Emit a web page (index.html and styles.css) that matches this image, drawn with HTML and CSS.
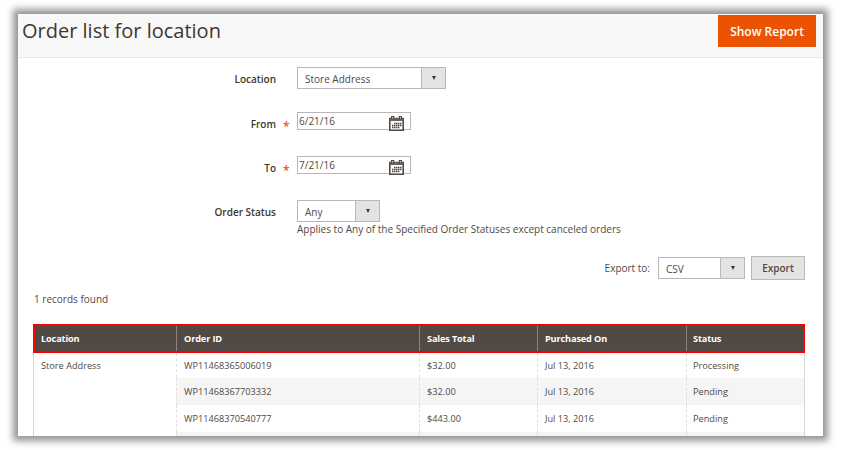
FILE: index.html
```html
<!DOCTYPE html>
<html lang="en">
<head>
<meta charset="utf-8">
<title>Order list for location</title>
<link rel="stylesheet" href="styles.css">
</head>
<body>
<svg width="0" height="0" class="defs" aria-hidden="true">
  <symbol id="calendar" viewBox="0 0 15 15">
    <path d="M.8 2.5h13.4v11.7H.8z" fill="#fff" stroke="#514943" stroke-width="1.6"/>
    <path d="M1 2h13v3H1z" fill="#6b625c"/>
    <path d="M2 0h3.2v3.2H2zM9.8 0H13v3.2H9.8z" fill="#514943"/>
    <path d="M3.1 1h1v1.4h-1zM10.9 1h1v1.4h-1z" fill="#d8d8d8"/>
    <path d="M5 7.5h7.5M3 9.5h9.5M3 11.5h7.4" fill="none" stroke="#514943" stroke-width="1.4" stroke-dasharray="1.5 .5"/>
  </symbol>
</svg>
<main class="panel">
  <header class="header">
    <h1>Order list for location</h1>
    <button class="primary">Show Report</button>
  </header>
  <form class="filters">
    <div class="field location">
      <label>Location</label>
      <div class="select wide"><span>Store Address</span><i></i></div>
    </div>
    <div class="field date">
      <label class="required">From</label>
      <div class="input"><span>6/21/16</span><svg><use href="#calendar"/></svg></div>
    </div>
    <div class="field date">
      <label class="required">To</label>
      <div class="input"><span>7/21/16</span><svg><use href="#calendar"/></svg></div>
    </div>
    <div class="field status">
      <label>Order Status</label>
      <div>
        <div class="select small"><span>Any</span><i></i></div>
        <p class="note">Applies to Any of the Specified Order Statuses except canceled orders</p>
      </div>
    </div>
  </form>
  <div class="export">
    <span class="export-label">Export to:</span>
    <div class="select csv"><span>CSV</span><i></i></div>
    <button class="secondary">Export</button>
  </div>
  <p class="records"><span>1 records found</span></p>
  <table class="grid">
    <colgroup><col class="c1"><col class="c2"><col class="c3"><col class="c4"><col class="c5"></colgroup>
    <thead>
      <tr><th><span>Location</span></th><th><span>Order ID</span></th><th><span>Sales Total</span></th><th><span>Purchased On</span></th><th><span>Status</span></th></tr>
    </thead>
    <tbody>
      <tr class="first"><td rowspan="4" class="group">Store Address</td><td>WP11468365006019</td><td>$32.00</td><td>Jul 13, 2016</td><td>Processing</td></tr>
      <tr class="odd"><td>WP11468367703332</td><td>$32.00</td><td>Jul 13, 2016</td><td>Pending</td></tr>
      <tr><td>WP11468370540777</td><td>$443.00</td><td>Jul 13, 2016</td><td>Pending</td></tr>
      <tr class="odd last"><td></td><td></td><td></td><td></td></tr>
    </tbody>
  </table>
</main>
</body>
</html>
```
FILE: styles.css
```css
* { box-sizing: border-box; }
body {
  margin: 0;
  padding: 14px 18px;
  height: 450px;
  overflow: hidden;
  background: #fff;
  font: 10px/14px "Open Sans", sans-serif;
  color: #514943;
}
.defs { display: none; }
h1, p { margin: 0; font-weight: 400; }
button { font-family: inherit; padding: 0; border-radius: 0; }
.panel {
  width: 805px;
  height: 422px;
  background: #fff;
  box-shadow: 0 0 7px 5px rgba(0, 0, 0, .42);
}
.header {
  display: flex;
  justify-content: space-between;
  height: 44px;
  padding: 1px 7px 0 4px;
  background: #f8f8f8;
  border-bottom: 1px solid #e8e8e8;
}
h1 { font-size: 20px; line-height: 32px; color: #41362f; }
.primary {
  width: 98px;
  height: 32px;
  border: 1px solid #eb5202;
  background: #eb5202;
  color: #fff;
  font-size: 12px;
  font-weight: 600;
}
.field { display: flex; }
.field label {
  width: 258px;
  text-align: right;
  margin-right: 21px;
  font-weight: 600;
  color: #41362f;
  position: relative;
}
.required::after {
  content: "*";
  position: absolute;
  left: 265px;
  top: 8px;
  color: #eb5202;
  font-size: 12px;
  font-weight: 600;
}
.location { height: 54px; padding-top: 9px; }
.location label, .status label { padding-top: 5px; }
.date { height: 44px; }
.date label { padding-top: 5px; }
.status { height: 56px; }
.select {
  display: flex;
  height: 22px;
  border: 1px solid #b8b8b8;
  background: #fff;
  line-height: 22px;
}
.select span { flex: 1; padding-left: 7px; }
.select i {
  width: 24px;
  background: #e3e3e3;
  border-left: 1px solid #b8b8b8;
  display: flex;
  justify-content: center;
  padding-top: 8px;
}
.select i::before {
  content: "";
  width: 0;
  height: 0;
  border: solid transparent;
  border-width: 4px 2.5px 0;
  border-top-color: #41362f;
}
.wide { width: 149px; }
.small { width: 83px; }
.csv { width: 87px; }
.input {
  display: flex;
  justify-content: space-between;
  width: 114px;
  height: 18px;
  padding: 0 6px 0 1px;
  border: 1px solid #b8b8b8;
  line-height: 16px;
}
.input svg { width: 15px; height: 15px; margin-top: 3px; overflow: visible; flex: none; }
.export {
  display: flex;
  justify-content: flex-end;
  align-items: center;
  height: 24px;
  padding-right: 18px;
}
.export-label { margin-right: 8px; }
.secondary {
  width: 54px;
  height: 24px;
  margin-left: 6px;
  border: 1px solid #b8b8b8;
  background: #e3e3e3;
  color: #514943;
  font-size: 10px;
  font-weight: 600;
}
.records { padding: 12px 0 0 16px; height: 44px; }
.grid {
  width: 772px;
  margin-left: 15px;
  border-collapse: separate;
  border-spacing: 0;
  table-layout: fixed;
  font-size: 9.2px;
}
.c1 { width: 143px; }
.c2 { width: 243px; }
.c3 { width: 118px; }
.c4 { width: 149px; }
th {
  height: 29px;
  padding: 0 0 0 8px;
  text-align: left;
  letter-spacing: -.15px;
  color: #fff;
  background: #514943;
  border: solid #f00;
  border-width: 2px 0;
  background-image: linear-gradient(#8a837f, #8a837f);
  background-size: 1px 100%;
  background-repeat: no-repeat;
}
th:first-child { border-left-width: 2px; padding-left: 6px; background-image: none; }
th:last-child { border-right-width: 2px; padding-left: 7px; }
td { height: 27px; padding: 0 0 0 7px; border-left: 1px dashed #e0e0e0; }
td:last-child { border-right: 1px solid #d6d6d6; padding-left: 6px; }
.first td { height: 25px; }
.odd td { background: #f5f5f5; }
.last td { height: 4px; padding: 0; }
td.group { vertical-align: top; padding-top: 6px; border-left: 1px solid #d6d6d6; }
```
